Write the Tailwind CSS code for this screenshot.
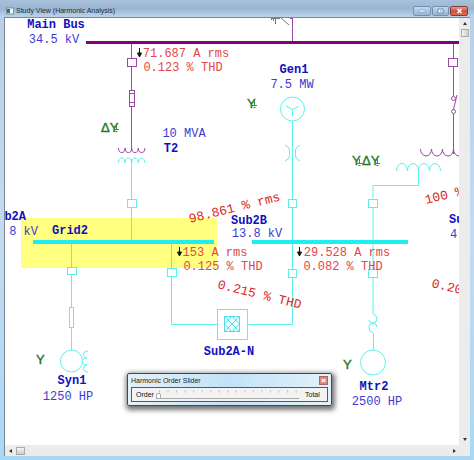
<!DOCTYPE html>
<html lang="en">
<head>
  <meta charset="UTF-8" />
  <meta name="viewport" content="width=device-width, initial-scale=1.0"/>
  <title>Study View (Harmonic Analysis)</title>
  <script src="https://cdn.jsdelivr.net/npm/@tailwindcss/browser@4"></script>
</head>
<body class="h-screen overflow-hidden font-['Liberation_Sans',sans-serif]">

  <div class="flex flex-col h-full pl-1 pr-1 pb-1 bg-linear-to-b from-[#b9cfe8] via-[#c4daf2] to-[#a9d8f5]">

    <!-- Title bar -->
    <header class="-mx-1 flex items-center h-[17px] shrink-0 pt-1 pl-[6px] pr-[6px] bg-linear-to-b from-[#a9c1da] via-[#9ab5d2] to-[#bdd3ec]">
      <svg class="w-2 h-2 shrink-0" viewBox="0 0 8 8" aria-hidden="true">
        <rect x="0.5" y="1" width="7" height="6" fill="#f4f8f4" stroke="#7d93a5"/>
        <rect x="1" y="2" width="3" height="4" fill="#2f7a5c"/>
      </svg>
      <h1 class="ml-[2px] text-[7px] leading-[10px] text-[#1d2b3a] whitespace-nowrap">Study View (Harmonic Analysis)</h1>
      <div class="ml-auto flex gap-px">
        <button type="button" aria-label="Minimize" class="w-[18px] h-[10px] rounded-xs border border-[#6f8fb3] bg-linear-to-b from-[#c3d6ec] to-[#96b5d8] flex items-center justify-center">
          <svg width="8" height="4" viewBox="0 0 8 4"><rect x="0.5" y="1" width="7" height="2" rx="1" fill="#fff" stroke="#6a84a3" stroke-width="0.6"/></svg>
        </button>
        <button type="button" aria-label="Maximize" class="w-[17px] h-[10px] rounded-xs border border-[#6f8fb3] bg-linear-to-b from-[#c3d6ec] to-[#96b5d8] flex items-center justify-center">
          <svg width="7" height="6" viewBox="0 0 7 6"><rect x="1" y="1" width="5" height="4" fill="#fff" stroke="#5e7896" stroke-width="0.8"/><rect x="3" y="2.5" width="1.5" height="1" fill="#5e7896"/></svg>
        </button>
        <button type="button" aria-label="Close" class="w-[18px] h-[10px] rounded-xs border border-[#8a3a35] bg-linear-to-b from-[#e09a8c] via-[#cf4f3c] to-[#d6705e] flex items-center justify-center">
          <svg width="7" height="6" viewBox="0 0 7 6"><path d="M1.5 1L5.5 5M5.5 1L1.5 5" stroke="#fff" stroke-width="1.6"/></svg>
        </button>
      </div>
    </header>

    <main class="flex flex-col flex-1 min-h-0 border-l border-t border-[#7c8794]">
      <div class="flex flex-1 min-h-0">

        <!-- One-line diagram -->
        <div class="relative flex-1 min-w-0 bg-white overflow-hidden">
          <svg class="block w-full h-full font-['Liberation_Mono',monospace] text-[12px]">
            <g transform="translate(-5 -18)">
              <rect x="21" y="218" width="196" height="50" fill="#ffff80"/>

              <!-- cut-off source symbol -->
              <path d="M271.5 18v2M273.5 18v3M275.5 18v6M271 18.5h9M281 18l8 7" fill="none" stroke="#777"/>

              <!-- 34.5 kV side -->
              <g fill="none" stroke="#9a4aa0">
                <path d="M292.5 18v23M290 18.5h3M131.5 44v107M453.5 44v52M453.5 114v40"/>
                <rect x="127.5" y="58.5" width="9" height="8" fill="#fff"/>
                <rect x="129.5" y="90.5" width="5" height="16" fill="#fff"/>
                <path d="M129.5 93.5h5M129.5 102.5h5"/>
                <path d="M118.500 148a3.3 4.5 0 0 0 6.6 0a3.3 4.5 0 0 0 6.6 0a3.3 4.5 0 0 0 6.6 0a3.3 4.5 0 0 0 6.6 0"/>
                <rect x="448.5" y="58.5" width="9" height="8" fill="#fff"/>
                <circle cx="453.5" cy="98.5" r="2" fill="#fff"/>
                <circle cx="453.5" cy="111.5" r="2" fill="#fff"/>
                <path d="M453.500 109.500L457 95"/>
                <path d="M420.5 149a5.5 7 0 0 0 11 0a5.5 7 0 0 0 11 0a5.5 7 0 0 0 11 0a5.5 7 0 0 0 11 0"/>
              </g>
              <rect x="86" y="41" width="373" height="3" fill="#800080"/>

              <!-- 13.8 kV side -->
              <g fill="none" stroke="#5cf0ea">
                <path d="M118.5 163a3.3 5 0 0 1 6.6 0a3.3 5 0 0 1 6.6 0a3.3 5 0 0 1 6.6 0a3.3 5 0 0 1 6.6 0"/>
                <path d="M131.5 159v81M71.5 243v107M171.5 243v81.5h45.5M292.5 121v203.5h-45M418.5 168v17.5h-45.5v128.5M373.5 333v17"/>
                <path d="M396.5 171a5.5 7.5 0 0 1 11 0a5.5 7.5 0 0 1 11 0a5.5 7.5 0 0 1 11 0a5.5 7.5 0 0 1 11 0"/>
                <g fill="#fff">
                  <rect x="127.5" y="199.5" width="9" height="8"/>
                  <rect x="67.5" y="267.5" width="9" height="7"/>
                  <rect x="69.5" y="307.5" width="4" height="20"/>
                  <rect x="167.5" y="268.5" width="9" height="8"/>
                  <rect x="288.5" y="199.5" width="8" height="8"/>
                  <rect x="288.5" y="269.5" width="8" height="8"/>
                  <rect x="368.5" y="199.5" width="9" height="8"/>
                  <rect x="368.5" y="269.5" width="9" height="8"/>
                  <rect x="217.5" y="309.5" width="30" height="30"/>
                  <circle cx="71.5" cy="361" r="11"/>
                  <circle cx="292.5" cy="109" r="12"/>
                  <circle cx="373" cy="362.5" r="12.5"/>
                </g>
                <path d="M286 106l6.5 3.5l6.5-3.5M292.5 109.5v7"/>
                <path d="M285 145q4.5 2 4.5 5v6q0 3-4.5 5M300 145q-4.5 2-4.5 5v6q0 3 4.5 5"/>
                <path d="M373 314q4 1 4 5q0 4-4 4q-4 0-4-3M377 327q0-3.5-4-3.5q-4 0-4 4.5q0 4 4 5"/>
                <path d="M88 351q-4.5 0-4.5 3.5q0 3.5 3.5 3.5q-4.5 0-4.5 3.5q0 3.5 4.5 3.5q-3.5 0-3.5 3.5q0 3.5 4.5 3.5"/>
                <g stroke="#55dce8">
                  <rect x="224.5" y="316.5" width="15" height="15" fill="#eaffff"/>
                  <path d="M224.5 324l7.5-7.5l7.5 7.5l-7.5 7.5zM224.5 316.5l15 15M239.5 316.5l-15 15"/>
                </g>
              </g>
              <g fill="#20eeee">
                <rect x="33" y="240" width="181" height="4"/>
                <rect x="252" y="240" width="156" height="4"/>
              </g>

              <!-- current direction arrows -->
              <g stroke="#111" fill="#111">
                <path d="M139.5 48v6M137.5 53h4l-2 4z"/>
                <path d="M179.5 247v6M177.5 252h4l-2 4z"/>
                <path d="M299.5 247v6M297.5 252h4l-2 4z"/>
              </g>

              <!-- winding connections -->
              <g fill="#1c7a1c" stroke="#1c7a1c" stroke-width="0.4" class="font-['Liberation_Sans',sans-serif] text-[13px]">
                <text x="101" y="132">ΔY</text>
                <text x="247" y="108">Y</text>
                <text x="352" y="165">Y</text>
                <text x="362" y="165">ΔY</text>
                <text x="36" y="364">Y</text>
                <text x="343" y="369">Y</text>
              </g>
              <g fill="none" stroke="#3a8f3a">
                <path d="M116.5 125v4M114 129.5h5M115.5 131.5h2"/>
                <path d="M254.5 101v4M252 105.5h5M253.5 107.5h2"/>
                <path d="M359.5 159v4M357 163.5h5M358.5 165.5h2"/>
                <path d="M377.5 159v4M375 163.5h5M376.5 165.5h2"/>
              </g>

              <g fill="#1010c0" class="font-bold" text-anchor="middle">
                <text x="56" y="28">Main Bus</text>
                <text x="294" y="73">Gen1</text>
                <text x="171" y="152">T2</text>
                <text x="249" y="224">Sub2B</text>
                <text x="70" y="234">Grid2</text>
                <text x="229" y="355">Sub2A-N</text>
                <text x="72" y="384">Syn1</text>
                <text x="374" y="390">Mtr2</text>
                <text x="26" y="220" text-anchor="end">b2A</text>
                <text x="449" y="223" text-anchor="start">Su</text>
              </g>
              <g fill="#3c3cd0" text-anchor="middle">
                <text x="54" y="43">34.5 kV</text>
                <text x="292" y="88">7.5 MW</text>
                <text x="184" y="137">10 MVA</text>
                <text x="257" y="237">13.8 kV</text>
                <text x="68" y="400">1250 HP</text>
                <text x="377" y="405">2500 HP</text>
                <text x="38" y="235" text-anchor="end">8 kV</text>
                <text x="450" y="238" text-anchor="start">4</text>
              </g>
              <g fill="#e04848" text-anchor="middle">
                <text x="186" y="57">71.687 A rms</text>
                <text x="183" y="71">0.123 % THD</text>
                <text x="215" y="256">153 A rms</text>
                <text x="223" y="270">0.125 % THD</text>
                <text x="347" y="256">29.528 A rms</text>
                <text x="343" y="270">0.082 % THD</text>
              </g>
              <g fill="#d82828" class="text-[13px]">
                <text transform="translate(190 223) rotate(-14)">98.861 % rms</text>
                <text transform="translate(217 288) rotate(14)">0.215 % THD</text>
                <text transform="translate(426 204) rotate(-14)">100 %</text>
                <text transform="translate(431 287) rotate(13)">0.20</text>
              </g>
            </g>
          </svg>

          <!-- Harmonic order slider -->
          <section class="absolute left-[122px] bottom-[39px] w-[205px] p-[3px] pt-0 rounded-xs border border-[#3d4a52] bg-linear-to-r from-[#e4f1f8] via-[#c2e2f8] to-[#e2f2fa] shadow-[1px_2px_5px_2px_rgba(0,0,0,0.55)]">
            <div class="flex items-center h-[13px]">
              <h2 class="text-[7px] leading-[10px] text-[#222] whitespace-nowrap">Harmonic Order Slider</h2>
              <button type="button" aria-label="Close slider" class="ml-auto w-[9px] h-[9px] border border-[#a86860] bg-[#d8877c] flex items-center justify-center">
                <svg width="5" height="5" viewBox="0 0 5 5"><path d="M0.5 1L4.5 4M4.5 1L0.5 4" stroke="#fff" stroke-width="1.2"/></svg>
              </button>
            </div>
            <div class="flex items-center h-[15px] px-1 border border-[#4e5d66] bg-[#f3f3f3] text-[7px] leading-[8px] text-[#111]">
              <label for="order" class="w-[20px]">Order</label>
              <div class="flex-1 flex flex-col">
                <svg class="w-full h-[3px]" viewBox="0 0 144 3" preserveAspectRatio="none" aria-hidden="true">
                  <path d="M3 1.5h140" stroke="#bbb" stroke-width="2" stroke-dasharray="1 7.6"/>
                </svg>
                <input id="order" type="range" min="0" max="16" value="0" class="block appearance-none w-full h-[6px] bg-transparent [&::-webkit-slider-runnable-track]:h-[6px] [&::-webkit-slider-runnable-track]:border-b [&::-webkit-slider-runnable-track]:border-[#aaa] [&::-webkit-slider-thumb]:appearance-none [&::-webkit-slider-thumb]:w-[5px] [&::-webkit-slider-thumb]:h-[6px] [&::-webkit-slider-thumb]:rounded-t-xs [&::-webkit-slider-thumb]:border [&::-webkit-slider-thumb]:border-[#aaa] [&::-webkit-slider-thumb]:bg-white"/>
              </div>
              <span class="w-[24px] pl-[6px]">Total</span>
            </div>
          </section>
        </div>

        <!-- Vertical scroll bar -->
        <div class="w-[11px] shrink-0 flex flex-col items-center bg-[#ececec] pt-[4px] pb-[4px]">
          <svg width="4" height="3" viewBox="0 0 4 3"><path d="M2 0L4 3H0z" fill="#333"/></svg>
          <div class="mt-[4px] w-[8px] h-[8px] border border-[#aaa] bg-linear-to-r from-[#f4f4f4] to-[#cfcfcf]"></div>
          <svg class="mt-auto" width="4" height="3" viewBox="0 0 4 3"><path d="M0 0H4L2 3z" fill="#333"/></svg>
        </div>
      </div>

      <!-- Horizontal scroll bar -->
      <div class="h-[11px] shrink-0 flex items-center bg-[#ececec] pl-[4px] pr-[14px]">
        <svg width="3" height="4" viewBox="0 0 3 4"><path d="M3 0V4L0 2z" fill="#333"/></svg>
        <div class="ml-[4px] w-[9px] h-[8px] border border-[#aaa] bg-linear-to-b from-[#f4f4f4] to-[#cfcfcf]"></div>
        <svg class="ml-auto" width="3" height="4" viewBox="0 0 3 4"><path d="M0 0V4L3 2z" fill="#333"/></svg>
      </div>
    </main>
  </div>

</body>
</html>
